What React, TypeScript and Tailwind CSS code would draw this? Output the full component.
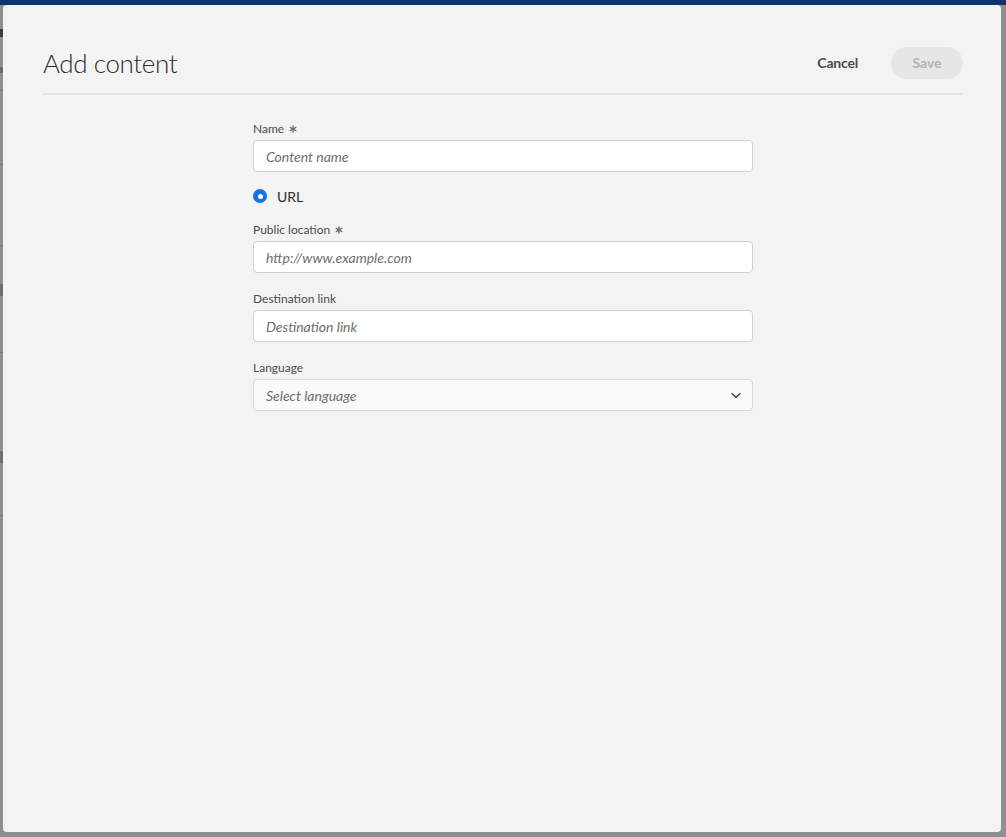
import React from 'react';

const font = { fontFamily: 'Lato, "Open Sans", sans-serif' };

const Star = () => (
  <svg width="8" height="8" viewBox="0 0 8 8" className="ml-[5px] inline-block" aria-hidden>
    <g stroke="#6e6e6e" strokeWidth="1.3" strokeLinecap="round">
      <line x1="4" y1="0.8" x2="4" y2="7.2" />
      <line x1="1.2" y1="2.4" x2="6.8" y2="5.6" />
      <line x1="1.2" y1="5.6" x2="6.8" y2="2.4" />
    </g>
  </svg>
);

const Label: React.FC<{ text: string; required?: boolean; className?: string }> = ({ text, required, className }) => (
  <div className={`flex h-4 items-center text-[12px] text-[#4b4b4b] ${className ?? ''}`}>
    {text}
    {required && <Star />}
  </div>
);

const TextField: React.FC<{ placeholder: string }> = ({ placeholder }) => (
  <input
    type="text"
    placeholder={placeholder}
    className="mt-[3px] block h-8 w-full rounded-[4px] border border-[#d0d0d0] bg-white px-3 text-[14px] italic text-[#2c2c2c] placeholder:text-[#6e6e6e] outline-none"
    style={font}
  />
);

export default function App() {
  return (
    <div className="relative h-[837px] w-[1006px] overflow-hidden bg-[#8f8f8f]" style={font}>
      {/* page behind the overlay */}
      <div className="h-[5px] w-full bg-[#0c356e]" />
      <div className="flex w-[3px] flex-col">
        <div className="mt-[24px] h-[8px] w-[3px] bg-[#3a3a3a]" />
        <div className="mt-[30px] h-[6px] w-[3px] bg-[#6a6a6a]" />
        <div className="mt-[17px] h-px w-[3px] bg-[#7d7d7d]" />
        <div className="mt-[73px] h-px w-[3px] bg-[#7d7d7d]" />
        <div className="mt-[80px] h-px w-[3px] bg-[#7d7d7d]" />
        <div className="mt-[38px] h-[12px] w-[3px] bg-[#6f6f6f]" />
        <div className="mt-[56px] h-px w-[3px] bg-[#7d7d7d]" />
        <div className="mt-[98px] h-[12px] w-[3px] bg-[#6f6f6f]" />
        <div className="mt-[52px] h-px w-[3px] bg-[#7d7d7d]" />
      </div>

      {/* dialog */}
      <div className="absolute left-[3px] top-[5px] flex h-[827px] w-[998px] flex-col rounded-[4px] bg-[#f3f3f3]">
        <div className="ml-[40px] mr-[38px] mt-[40px] flex h-[35px] items-center justify-between">
          <h1 className="text-[26px] font-light leading-none tracking-[-0.4px] text-[#2c2c2c]">Add content</h1>
          <div className="flex items-center">
            <button className="text-[14px] font-bold tracking-[-0.2px] text-[#4b4b4b]">Cancel</button>
            <button className="ml-[33px] h-[32px] w-[72px] rounded-full bg-[#e6e6e6] text-[14px] font-bold text-[#b3b3b3]">
              Save
            </button>
          </div>
        </div>
        <div className="ml-[40px] mr-[38px] mt-[13px] h-[2px] bg-[#e3e3e3]" />

        <form className="ml-[250px] mt-[26px] w-[500px]">
          <Label text="Name" required />
          <TextField placeholder="Content name" />

          <label className="mt-[12px] flex h-6 items-center">
            <span className="flex h-[14px] w-[14px] items-center justify-center rounded-full bg-[#1473e6]">
              <span className="h-[5px] w-[5px] rounded-full bg-white" />
            </span>
            <span className="ml-[10px] text-[14px] text-[#2c2c2c]">URL</span>
          </label>

          <Label text="Public location" required className="mt-[14px]" />
          <TextField placeholder="http://www.example.com" />

          <Label text="Destination link" className="mt-[18px]" />
          <TextField placeholder="Destination link" />

          <Label text="Language" className="mt-[18px]" />
          <button
            type="button"
            className="mt-[3px] flex h-8 w-full items-center justify-between rounded-[4px] border border-[#d8d8d8] bg-[#fafafa] pl-3 pr-[11px] text-[14px] italic text-[#6e6e6e]"
          >
            Select language
            <svg width="10" height="7" viewBox="0 0 10 7" aria-hidden>
              <path d="M1 1.5 L5 5.3 L9 1.5" fill="none" stroke="#505050" strokeWidth="1.6" strokeLinecap="round" strokeLinejoin="round" />
            </svg>
          </button>
        </form>
      </div>
    </div>
  );
}
